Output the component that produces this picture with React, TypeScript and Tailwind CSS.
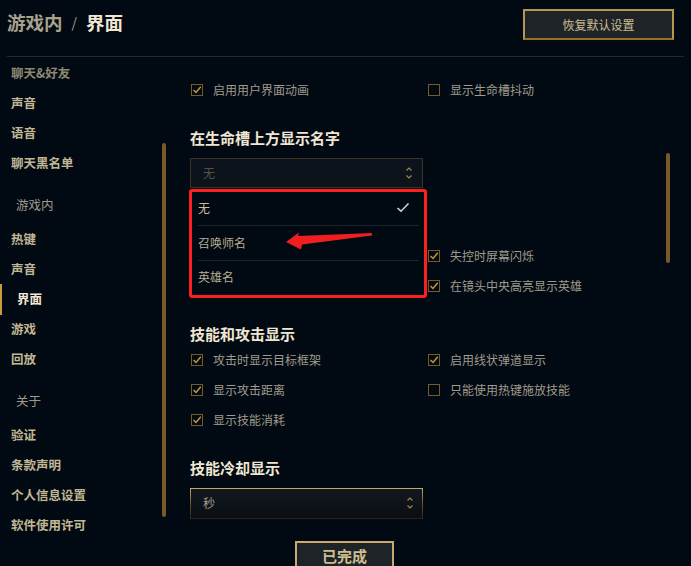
import React from 'react';

const FONT = { fontFamily: '"Noto Sans CJK SC", "Noto Sans", sans-serif' };

const Check: React.FC<{ checked?: boolean }> = ({ checked }) => (
  <span className="w-[12px] h-[12px] border border-[#785a28] flex items-center justify-center shrink-0">
    {checked && (
      <svg width="10" height="10" viewBox="0 0 10 10">
        <polyline points="1.5,5 4,7.5 8.8,1.8" fill="none" stroke="#c89b3c" strokeWidth="1.4" />
      </svg>
    )}
  </span>
);

const Option: React.FC<{ label?: string; checked?: boolean }> = ({ label, checked }) => (
  <div className="h-[30px] flex items-center gap-[10px] pl-[1px]">
    {label && (
      <>
        <Check checked={checked} />
        <span className="text-[12px] text-[#a09b8c] leading-none">{label}</span>
      </>
    )}
  </div>
);

const Arrows: React.FC = () => (
  <svg width="8" height="14" viewBox="0 0 8 14">
    <polyline points="1.5,4.5 4,2 6.5,4.5" fill="none" stroke="#a08550" strokeWidth="1.2" />
    <polyline points="1.5,9.5 4,12 6.5,9.5" fill="none" stroke="#a08550" strokeWidth="1.2" />
  </svg>
);

const Heading: React.FC<{ children: React.ReactNode; className?: string }> = ({ children, className }) => (
  <h3 className={`h-[20px] text-[15px] leading-[20px] font-bold text-[#f0e6d2] ${className ?? ''}`}>{children}</h3>
);

type NavItem = { label: string; kind?: 'group' | 'active' | 'dim' };

const nav: NavItem[] = [
  { label: '聊天&好友', kind: 'dim' },
  { label: '声音' },
  { label: '语音' },
  { label: '聊天黑名单' },
  { label: '游戏内', kind: 'group' },
  { label: '热键' },
  { label: '声音' },
  { label: '界面', kind: 'active' },
  { label: '游戏' },
  { label: '回放' },
  { label: '关于', kind: 'group' },
  { label: '验证' },
  { label: '条款声明' },
  { label: '个人信息设置' },
  { label: '软件使用许可' },
];

const Sidebar: React.FC = () => (
  <div className="w-[190px] flex shrink-0">
    <div className="w-[162px] pt-[1px]">
      {nav.map((item, i) => {
        if (item.kind === 'group')
          return (
            <div key={i} className="h-[46px] pt-[8px] pl-[16px] flex items-center text-[12.5px] text-[#a09b8c]">
              {item.label}
            </div>
          );
        if (item.kind === 'active')
          return (
            <div key={i} className="h-[30px] flex items-center">
              <span className="w-[2px] h-[31px] bg-[#c89b3c]" />
              <span className="pl-[15px] text-[12.5px] font-bold text-[#f0e6d2]">{item.label}</span>
            </div>
          );
        return (
          <div
            key={i}
            className={`h-[30px] flex items-center pl-[11px] text-[12.5px] font-bold ${
              item.kind === 'dim' ? 'text-[#8f8872]' : 'text-[#c2b794]'
            }`}
          >
            {item.label}
          </div>
        );
      })}
    </div>
    <div className="w-[4px] mt-[86px] h-[374px] rounded-full bg-[#785a28]" />
  </div>
);

const Dropdown: React.FC = () => (
  <div className="absolute left-[-2px] top-[30px] w-[238px] h-[109px] border-[3px] border-[#ff1e1e] rounded-[3px] bg-[#010a13] pl-[6px] pr-[5px] flex flex-col">
    <div className="h-[34px] pb-[2px] flex items-center justify-between pr-[9px] border-b border-[#1e2328]">
      <span className="text-[12px] text-[#cdbe91]">无</span>
      <svg width="14" height="11" viewBox="0 0 14 11">
        <polyline points="1.5,6 5,9.2 12.5,1.5" fill="none" stroke="#cfcfcf" strokeWidth="1.6" />
      </svg>
    </div>
    <div className="h-[35px] flex items-center border-b border-[#1e2328]">
      <span className="text-[12px] text-[#b8ad90]">召唤师名</span>
    </div>
    <div className="flex-1 pb-[3px] flex items-center">
      <span className="text-[12px] text-[#b8ad90]">英雄名</span>
    </div>
  </div>
);

const RedArrow: React.FC = () => (
  <svg className="absolute left-0 top-0 pointer-events-none" width="200" height="100" viewBox="0 0 200 100">
    <polygon points="95,83 108,73.5 107,77 181,74 181,76.5 111,85.5 110,90.5" fill="#f01e1e" />
  </svg>
);

export default function App() {
  return (
    <div className="w-[691px] h-[566px] overflow-hidden bg-[#010a13]" style={FONT}>
      <header className="h-[57px] mx-[7px] border-b border-[#23282e] flex items-start justify-between pr-[10px]">
        <h1 className="mt-[8px] text-[18.5px] leading-[28px] font-bold flex items-center gap-[9px]">
          <span className="text-[#a8a18c]">游戏内</span>
          <span className="text-[#a09b8c] text-[14px] font-normal">/</span>
          <span className="text-[#f0e6d2]">界面</span>
        </h1>
        <button className="mt-[9px] w-[151px] h-[31px] border-2 border-[#b8964f] border-b-[#9a7025] bg-[#1e2328] flex items-center justify-center text-[12px] text-[#cdbe91]">
          恢复默认设置
        </button>
      </header>

      <div className="flex">
        <Sidebar />

        <div className="flex">
          <main className="w-[476px]">
            <div className="mt-[18px] grid grid-cols-[237px_1fr]">
              <Option label="启用用户界面动画" checked />
              <Option label="显示生命槽抖动" />
            </div>

            <Heading className="mt-[23px]">在生命槽上方显示名字</Heading>

            <div className="relative mt-[10px] w-[233px] h-[30px] border border-[#3a3222] bg-[#0d131a] flex items-center justify-between pl-[12px] pr-[9px]">
              <span className="text-[12px] text-[#55524a]">无</span>
              <Arrows />
              <Dropdown />
              <RedArrow />
            </div>

            <div className="mt-[53px] grid grid-cols-[237px_1fr]">
              <Option />
              <Option label="失控时屏幕闪烁" checked />
              <Option />
              <Option label="在镜头中央高亮显示英雄" checked />
            </div>

            <Heading className="mt-[23px]">技能和攻击显示</Heading>

            <div className="mt-[1px] grid grid-cols-[237px_1fr]">
              <Option label="攻击时显示目标框架" checked />
              <Option label="启用线状弹道显示" checked />
              <Option label="显示攻击距离" checked />
              <Option label="只能使用热键施放技能" />
              <Option label="显示技能消耗" checked />
            </div>

            <Heading className="mt-[23px]">技能冷却显示</Heading>

            <div className="mt-[10px] w-[233px] h-[31px] p-[1px] bg-gradient-to-b from-[#c8aa6e] via-[#6e5526] to-[#2a2418]">
              <div className="w-full h-full bg-gradient-to-b from-[#111820] to-[#0a0e13] flex items-center justify-between pl-[12px] pr-[8px] pb-[1px]">
                <span className="text-[12px] text-[#a09b8c]">秒</span>
                <Arrows />
              </div>
            </div>

            <div className="mt-[22px] ml-[103px] flex items-end gap-[1px]">
              <span className="w-[1px] h-[8px] bg-[#785a28] mb-[-2px]" />
              <button className="w-[99px] h-[32px] border-2 border-[#c8aa6e] bg-[#1e2328] text-[15px] font-bold text-[#cdbe91] leading-none pb-[3px]">
                已完成
              </button>
              <span className="w-[1px] h-[8px] bg-[#785a28] mb-[-2px]" />
            </div>
          </main>
          <div className="w-[4px] mt-[96px] h-[110px] rounded-full bg-[#785a28]" />
        </div>
      </div>
    </div>
  );
}
